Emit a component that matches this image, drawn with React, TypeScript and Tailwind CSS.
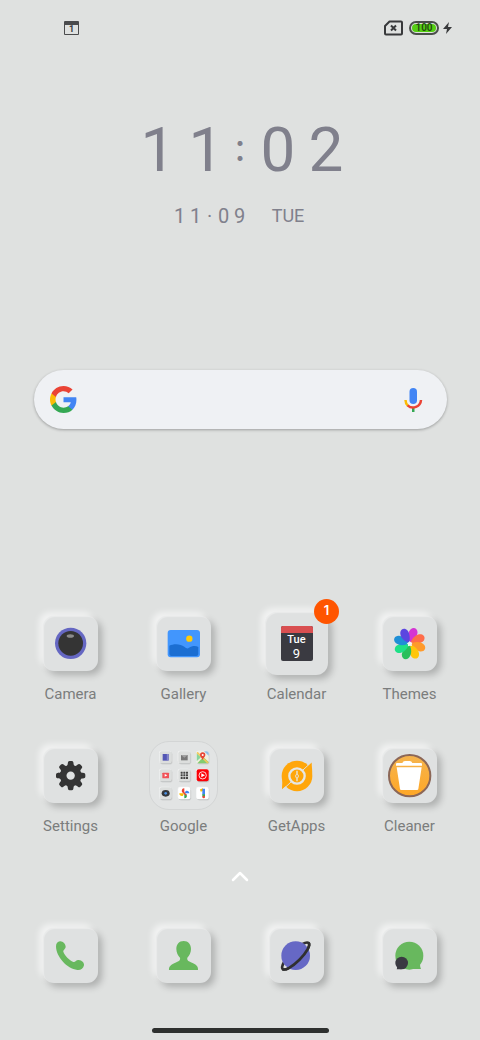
import type { ReactNode } from "react";

const TILE =
  "flex items-center justify-center bg-[#dfe1e1] shadow-[-4px_-4px_6px_rgba(255,255,255,0.6),4px_4px_7px_rgba(0,0,0,0.22),inset_1px_1px_1px_rgba(255,255,255,0.35)]";

function Tile({ box, children }: { box: string; children: ReactNode }) {
  return (
    <span className={`${TILE} size-[55px] rounded-[11px]`}>
      <svg viewBox={box} className="size-full" aria-hidden="true">
        {children}
      </svg>
    </span>
  );
}

function CameraIcon() {
  return (
    <Tile box="71 78 165 165">
      <circle cx="154" cy="160" r="47" fill="#6567c2" />
      <circle cx="154" cy="160" r="37" fill="#343434" />
      <ellipse cx="153" cy="138" rx="11" ry="5.5" fill="#8b8b8b" />
    </Tile>
  );
}

function GalleryIcon() {
  return (
    <Tile box="409 78 165 165">
      <rect x="444" y="120" width="97" height="82" rx="9" fill="#4296fd" />
      <path d="M449 167C462 160 483 161 494 170C500 175 504 177 508 173C516 168 528 166 536 171V192Q536 198 530 198H455Q449 198 449 192Z" fill="#1b6ed2" />
      <circle cx="509" cy="146" r="9.5" fill="#fecb0b" />
    </Tile>
  );
}

function CalendarIcon() {
  return (
    <span className={`${TILE} relative size-[63px] rounded-xl`}>
      <span className="flex h-[35px] w-8 flex-col items-center overflow-hidden rounded-[2px] bg-[#3a3a41] text-white">
        <span className="h-[7px] w-full shrink-0 bg-[#d94f51]" />
        <span className="text-[11px] leading-[14px] font-medium">Tue</span>
        <span className="text-[13px] leading-[13px]">9</span>
      </span>
      <span className="absolute -top-[13px] -right-[11px] flex size-[25px] items-center justify-center rounded-full bg-[#ff5500] font-[Inter,sans-serif] text-[13px] font-semibold text-white">
        1
      </span>
    </span>
  );
}

const PETALS = ["#d535d3", "#ff6d4a", "#ff9a2b", "#ffc60b", "#29bf5b", "#1fe087", "#1f8fd6", "#5b46e0"];

function ThemesIcon() {
  return (
    <Tile box="426 78 165 165">
      <g transform="translate(509 161)">
        {PETALS.map((color, i) => (
          <path
            key={color}
            d="M-3 -6C-14 -19 -15 -34 -9 -43C-3 -52 10 -50 13 -38C15 -26 8 -13 2 -5Z"
            fill={color}
            transform={`rotate(${i * 45 + 17})`}
          />
        ))}
        <path d="M0 -8L3 -4L8 -3L6 2L7 7L1 6L-5 8L-5 2L-9 -2L-3 -3Z" fill="#f4f4f4" />
      </g>
    </Tile>
  );
}

const TEETH = [0, 45, 90, 135, 180, 225, 270, 315];

function SettingsIcon() {
  return (
    <Tile box="71 67 165 165">
      <g transform="translate(154 150)" fill="#343434">
        <circle r="32" />
        {TEETH.map((angle) => (
          <path key={angle} d="M-14 -26C-8 -31 -9 -36 -8 -40Q-7 -44 -3 -44H3Q7 -44 8 -40C9 -36 8 -31 14 -26Z" transform={`rotate(${angle})`} />
        ))}
        <circle r="12.500" fill="#dfe1e1" />
      </g>
    </Tile>
  );
}

function MiniTile({ x, y, fill = "#dcdedd", children }: { x: number; y: number; fill?: string; children: ReactNode }) {
  return (
    <g transform={`translate(${x} ${y})`}>
      <rect x="-16" y="-15" width="37" height="37" rx="7" fill="#000" opacity="0.06" />
      <rect x="-17" y="-16" width="36" height="36" rx="7" fill="#000" opacity="0.1" />
      <rect x="-20" y="-20" width="37" height="37" rx="7" fill="#f3f4f4" />
      <rect x="-18" y="-18" width="36" height="36" rx="6" fill={fill} />
      {children}
    </g>
  );
}

const DOTS = [-8, 0, 8];

function GoogleFolderIcon() {
  return (
    <span className="flex size-[69px] items-center justify-center overflow-hidden rounded-[20px] border border-[#d3d5d5] bg-[#e2e4e4]">
      <svg viewBox="15 21 201 201" className="size-full" aria-hidden="true">
        <MiniTile x={62} y={67}>
          <rect x="-9" y="-10" width="18" height="20" fill="#5457b5" />
          <path d="M5 -10V10" stroke="#8d90d2" strokeWidth="3" />
        </MiniTile>
        <MiniTile x={118} y={67}>
          <rect x="-10" y="-7" width="20" height="16" fill="#777" />
          <path d="M-10 -7L0 1L10 -7Z" fill="#a1a1a1" />
        </MiniTile>
        <MiniTile x={173} y={67} fill="#f1eee0">
          <path d="M-18 -12V12L-5 0Z" fill="#8bd59c" />
          <path d="M-16 18L2 -1L18 14Q18 18 12 18Z" fill="#83cc70" />
          <path d="M4 -18L18 -5V-12Q18 -18 12 -18Z" fill="#90bfe8" />
          <path d="M-17 -15L16 17" stroke="#f5c95d" strokeWidth="5" />
          <path d="M0 8C-2 1 -8 -2 -8 -7A8 8 0 0 1 8 -7C8 -2 2 1 0 8Z" fill="#e64436" />
          <circle cy="-7" r="3" fill="#fff" />
        </MiniTile>
        <MiniTile x={62} y={121}>
          <rect x="-10" y="-8" width="20" height="17" rx="2" fill="#f15258" />
          <path d="M-3 -4L5 0L-3 4Z" fill="#fff" />
        </MiniTile>
        <MiniTile x={118} y={121}>
          {DOTS.map((dy) =>
            DOTS.map((dx) => <rect key={`${dx},${dy}`} x={dx - 3} y={dy - 3} width="6" height="6" rx="1" fill="#444" />),
          )}
        </MiniTile>
        <MiniTile x={173} y={121} fill="#fb0007">
          <circle r="11" fill="none" stroke="#fff" strokeWidth="2.500" />
          <path d="M-4 -6L7 0L-4 6Z" fill="#fff" />
        </MiniTile>
        <MiniTile x={62} y={175}>
          <ellipse rx="12" ry="10" fill="#34373b" />
          <circle r="4" fill="#4a8fe0" />
        </MiniTile>
        <MiniTile x={118} y={175} fill="#fff">
          <path d="M0 -1V-15C-7 -15 -9 -9 -7 -4Z" fill="#ea4335" />
          <path d="M1 0H15C15 -7 9 -9 4 -7Z" fill="#4285f4" />
          <path d="M0 1V15C7 15 9 9 7 4Z" fill="#34a853" />
          <path d="M-1 0H-15C-15 7 -9 9 -4 7Z" fill="#fbbc04" />
          <path d="M-6 -6L6 6" stroke="#ea4335" strokeWidth="4" />
        </MiniTile>
        <MiniTile x={173} y={175} fill="#fff">
          <path d="M-7 -8L2 -12" stroke="#fbbc04" strokeWidth="7" />
          <path d="M3 -14V4" stroke="#4285f4" strokeWidth="8" />
          <path d="M3 3V10" stroke="#34a853" strokeWidth="8" />
          <circle cx="3" cy="11" r="4" fill="#ea4335" />
        </MiniTile>
      </svg>
    </span>
  );
}

function GetAppsIcon() {
  return (
    <Tile box="87 69 165 165">
      <circle cx="171" cy="153" r="46" fill="#ffa60a" />
      <path d="M196 129L215 112C215 126 218 139 216 151Z" fill="#ffa60a" />
      <path d="M126 158C128 170 126 180 126 193L144 178Z" fill="#ffa60a" />
      <path d="M188 136L220 106M154 170L122 200" stroke="#dfe1e1" strokeWidth="3" />
      <circle cx="171" cy="153" r="23" fill="none" stroke="#e6e7e4" strokeWidth="7" />
      <path d="M169 137V147Q162 153 169 160V169H173V160Q180 153 173 147V137Z" fill="#e6e7e4" />
      <path d="M171 148L174 153L171 159L168 153Z" fill="#ffa60a" />
    </Tile>
  );
}

function CleanerIcon() {
  return (
    <Tile box="429 69 165 165">
      <defs>
        <linearGradient id="cleaner" x1="0" y1="0" x2="0" y2="1">
          <stop offset="0" stopColor="#f5b44e" />
          <stop offset="1" stopColor="#ffa726" />
        </linearGradient>
      </defs>
      <circle cx="512" cy="152" r="62" fill="url(#cleaner)" stroke="#8c6757" strokeWidth="6" />
      <path d="M474 114H490Q492 108 498 108H512Q518 108 520 114H546Q549 114 549 118V122H471V118Q471 114 474 114Z" fill="#fff" />
      <path d="M473 127H548L538 192Q538 195 534 195H487Q483 195 483 192Z" fill="#fff" />
    </Tile>
  );
}

function PhoneIcon() {
  return (
    <Tile box="71 54 165 165">
      <path
        d="M122 94C130 93 139 102 139 110C139 117 131 119 132 125C136 137 150 150 162 156C168 158 170 149 178 150C188 151 195 158 194 166C192 176 184 181 174 180C143 177 110 140 110 109C110 100 115 95 122 94Z"
        fill="#68b85e"
      />
    </Tile>
  );
}

function ContactsIcon() {
  return (
    <Tile box="408 54 165 165">
      <path
        d="M491 93C505 93 513 103 513 117C513 128 508 137 502 143C500 152 507 154 516 158C530 164 535 170 534 180H447C446 170 452 164 466 158C475 154 482 152 480 143C474 137 469 128 469 117C469 103 477 93 491 93Z"
        fill="#68b85e"
      />
    </Tile>
  );
}

function BrowserIcon() {
  return (
    <Tile box="86 56 165 165">
      <ellipse cx="166" cy="140" rx="55" ry="16" transform="rotate(-45 166 140)" fill="none" stroke="#303030" strokeWidth="8" />
      <circle cx="166" cy="139" r="43" fill="#6668c5" />
      <path d="M-55 0A55 16 0 0 0 55 0" transform="translate(166 140) rotate(-45)" fill="none" stroke="#303030" strokeWidth="8" />
    </Tile>
  );
}

function MessagesIcon() {
  return (
    <Tile box="426 54 165 165">
      <circle cx="508" cy="137" r="42" fill="#68b85e" />
      <path d="M546 152C538 162 540 168 543 177H490V150Z" fill="#68b85e" />
      <circle cx="485" cy="159" r="19" fill="#3a3a42" />
      <path d="M468 165C473 171 472 174 470 178H485Z" fill="#3a3a42" />
    </Tile>
  );
}

const APPS = [
  { name: "Camera", icon: <CameraIcon /> },
  { name: "Gallery", icon: <GalleryIcon /> },
  { name: "Calendar", icon: <CalendarIcon /> },
  { name: "Themes", icon: <ThemesIcon /> },
  { name: "Settings", icon: <SettingsIcon /> },
  { name: "Google", icon: <GoogleFolderIcon /> },
  { name: "GetApps", icon: <GetAppsIcon /> },
  { name: "Cleaner", icon: <CleanerIcon /> },
];

const DOCK = [
  { name: "Phone", icon: <PhoneIcon /> },
  { name: "Contacts", icon: <ContactsIcon /> },
  { name: "Browser", icon: <BrowserIcon /> },
  { name: "Messages", icon: <MessagesIcon /> },
];

function StatusBar() {
  return (
    <header className="flex h-14 items-center justify-between pr-7 pl-16 text-[#38393b]">
      <span className="flex h-[14px] w-[15px] items-center justify-center rounded-[1px] border border-t-4 border-[#4a4b4d] text-[9px] leading-none font-bold">
        1
      </span>
      <div className="flex items-center gap-1">
        <svg viewBox="0 0 20 16" className="mr-0.5 h-4 w-5" fill="none" stroke="currentColor" strokeWidth="2" strokeLinejoin="round" aria-hidden="true">
          <path d="M6.500 1.500H18Q19 1.500 19 2.500V13.500Q19 14.500 18 14.500H3Q2 14.500 2 13.500V6Z" />
          <path d="M8 5.500L13 10.500M13 5.500L8 10.500" />
        </svg>
        <span className="flex h-[14px] w-[30px] rounded-full border-2 border-[#4b4e4a] p-px">
          <span className="flex flex-1 items-center justify-center rounded-full bg-[#55ce12] text-[10px] leading-none font-semibold text-[#244a12]">100</span>
        </span>
        <svg viewBox="0 0 9 14" className="h-[14px] w-[9px]" fill="currentColor" aria-hidden="true">
          <path d="M6 1L0 8H4L3 13L9 6H5Z" />
        </svg>
      </div>
    </header>
  );
}

function Clock() {
  return (
    <section className="mt-16 flex flex-col items-center text-[#80808c]">
      <time className="flex h-15 items-center pl-1 text-center text-[62px] leading-none">
        <span className="w-12">1</span>
        <span className="w-12">1</span>
        <span className="w-6 pr-1 pb-2 font-[Lato,sans-serif] text-[40px]">:</span>
        <span className="w-12">0</span>
        <span className="w-12">2</span>
      </time>
      <div className="mt-6 flex h-6 items-center pr-1 text-center text-[20px] leading-none">
        <span className="w-4">1</span>
        <span className="w-4">1</span>
        <span className="w-3">·</span>
        <span className="w-4">0</span>
        <span className="w-4">9</span>
        <span className="pl-6 text-[18px]">TUE</span>
      </div>
    </section>
  );
}

function SearchBar() {
  return (
    <form className="mr-[33px] ml-[34px] mt-[142px] flex h-[59px] items-center rounded-full bg-[#eff1f4] px-4 shadow-[0_1px_3px_rgba(0,0,0,0.3)]">
      <button type="button" aria-label="Google">
        <svg viewBox="0 0 48 48" className="size-[27px]" aria-hidden="true">
          <path fill="#4285f4" d="M47 24.500c0-1.600-.1-3.100-.4-4.500H24v9h12.900c-.6 3-2.300 5.500-4.800 7.200v6h7.700C44.300 38 47 31.800 47 24.500z" />
          <path fill="#34a853" d="M24 48c6.500 0 11.900-2.100 15.900-5.800l-7.800-6c-2.100 1.400-4.900 2.300-8.100 2.300-6.200 0-11.500-4.200-13.400-9.900H2.700v6.200C6.600 42.600 14.700 48 24 48z" />
          <path fill="#fbbc05" d="M10.600 28.600c-.5-1.400-.8-3-.8-4.600s.3-3.200.8-4.600v-6.200H2.700C1 16.500 0 20.100 0 24s1 7.500 2.700 10.800z" />
          <path fill="#ea4335" d="M24 9.500c3.500 0 6.700 1.200 9.200 3.600l6.900-6.900C35.900 2.400 30.500 0 24 0 14.700 0 6.600 5.400 2.700 13.200l7.900 6.200C12.500 13.700 17.800 9.500 24 9.500z" />
        </svg>
      </button>
      <input type="search" aria-label="Search" className="min-w-0 flex-1 bg-transparent px-3 text-base outline-none" />
      <button type="button" aria-label="Voice search" className="mr-2">
        <svg viewBox="0 0 20 26" className="h-[26px] w-5" fill="none" strokeWidth="2.500" aria-hidden="true">
          <rect x="6.500" y="1" width="7.500" height="16" rx="3.750" fill="#4285f4" />
          <path d="M10.250 20V25" stroke="#34a853" />
          <path d="M2.500 13A8 8 0 0 0 5 18.800" stroke="#fbbc05" />
          <path d="M4.600 18.400A8 8 0 0 0 18 13" stroke="#ea4335" />
        </svg>
      </button>
    </form>
  );
}

export default function App() {
  return (
    <div className="flex min-h-screen flex-col bg-[#dfe1e0] font-[Roboto,sans-serif]">
      <StatusBar />
      <main className="flex flex-col">
        <Clock />
        <SearchBar />
        <div className="mt-[179px] grid grid-cols-4 gap-y-[34px] px-3.5">
          {APPS.map((app) => (
            <button key={app.name} type="button" className="flex flex-col items-center gap-1">
              <span className="flex h-[70px] items-center">{app.icon}</span>
              <span className="text-[15px] leading-6 text-[#7b7d7d]">{app.name}</span>
            </button>
          ))}
        </div>
        <button type="button" aria-label="All apps" className="mt-7 self-center">
          <svg viewBox="0 0 20 20" className="size-5" fill="none" stroke="#fff" strokeWidth="2.500" strokeLinecap="round" strokeLinejoin="round" aria-hidden="true">
            <path d="M3 14L10 7L17 14" />
          </svg>
        </button>
      </main>
      <nav aria-label="Dock" className="mt-[34px] grid grid-cols-4 px-3.5">
        {DOCK.map((app) => (
          <button key={app.name} type="button" aria-label={app.name} className="flex h-[70px] items-center justify-center">
            {app.icon}
          </button>
        ))}
      </nav>
      <div className="mt-auto flex justify-center pb-[7px]">
        <div className="h-[5px] w-[177px] rounded-full bg-[#2e302f]" />
      </div>
    </div>
  );
}
